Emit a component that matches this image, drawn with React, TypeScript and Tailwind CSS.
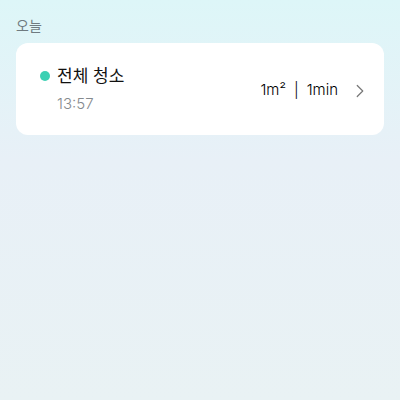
import { ChevronRight } from "lucide-react";

const font = { fontFamily: 'Inter, "Noto Sans CJK KR", sans-serif' };

export default function App() {
  return (
    <div
      className="w-[400px] h-[400px] bg-gradient-to-b from-[#ddf6f8] via-[#e8f0f7] via-40% to-[#e9f2f4] px-4 pt-[15px]"
      style={font}
    >
      <div className="text-[14px] leading-[22px] text-[#6f7a80]">오늘</div>
      <div className="mt-[6px] h-[92px] rounded-[12px] bg-white flex items-center pl-[24px] pr-[13px]">
        <div className="flex-1 flex flex-col -mt-[1px]">
          <div className="flex items-center gap-[7px]">
            <span className="w-[10px] h-[10px] rounded-full bg-[#3cd0b3]" />
            <span className="text-[17px] leading-[24px] text-[#111]">전체 청소</span>
          </div>
          <div className="mt-[6px] pl-[17px] text-[15px] leading-[20px] font-light text-[#858a8e]">13:57</div>
        </div>
        <div className="flex items-center text-[15px] font-light text-black mt-[3px]">
          <span>1m²</span>
          <span className="mx-[8px]">|</span>
          <span>1min</span>
          <ChevronRight className="ml-[11px] w-[22px] h-[22px] text-[#777]" strokeWidth={1.3} />
        </div>
      </div>
    </div>
  );
}
